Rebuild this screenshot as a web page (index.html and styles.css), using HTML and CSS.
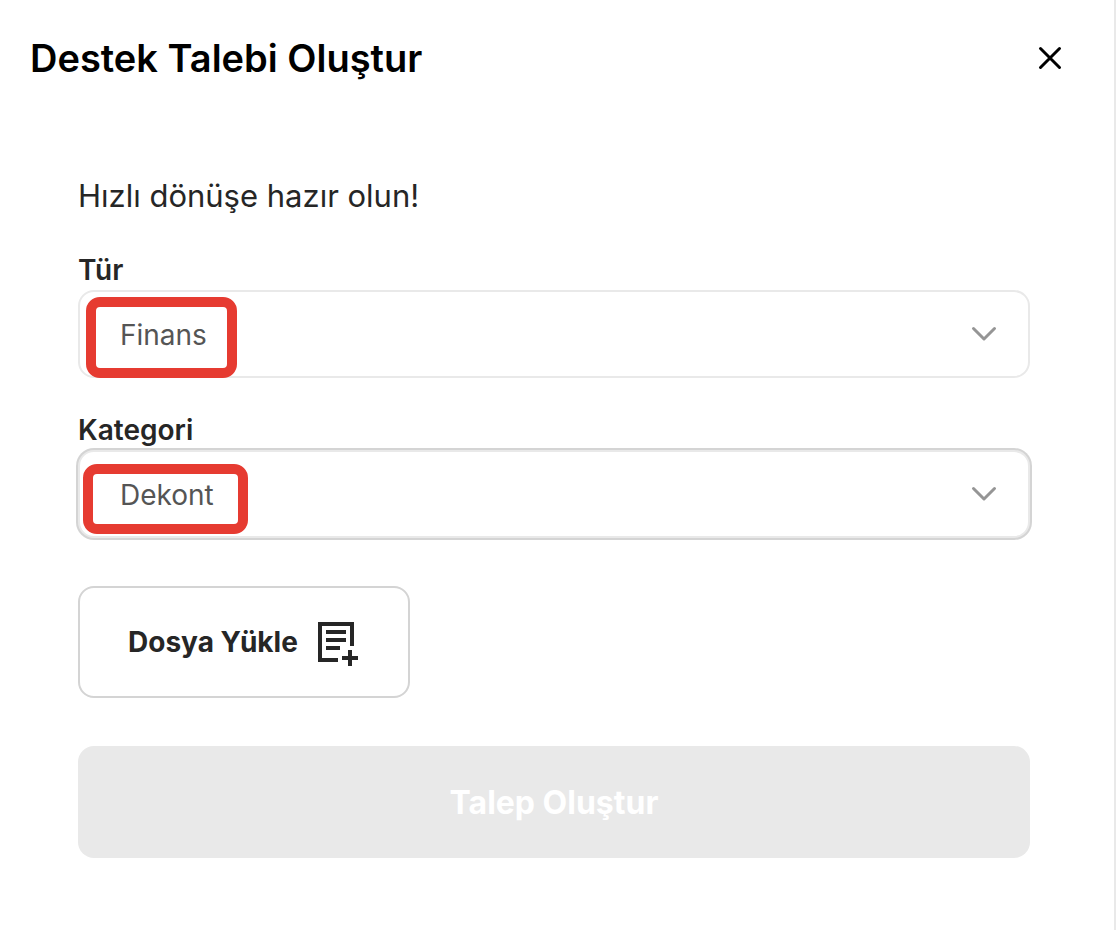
FILE: index.html
```html
<!DOCTYPE html>
<html lang="tr">
<head>
  <meta charset="UTF-8">
  <meta name="viewport" content="width=device-width, initial-scale=1.0">
  <title>Destek Talebi Oluştur</title>
  <link rel="stylesheet" href="styles.css">
</head>
<body>
  <div class="dialog">
    <header class="dialog-header">
      <h1>Destek Talebi Oluştur</h1>
      <button type="button" class="close-btn" aria-label="Kapat">
        <svg width="24" height="24" viewBox="0 0 24 24"><path d="M2.5 2.5 L21.5 21.5 M21.5 2.5 L2.5 21.5"/></svg>
      </button>
    </header>

    <form class="ticket-form">
      <p class="intro">Hızlı dönüşe hazır olun!</p>

      <div class="field">
        <label for="type">Tür</label>
        <div class="select-box">
          <select id="type">
            <option>Finans</option>
          </select>
          <svg class="chevron" width="28" height="18" viewBox="0 0 28 18"><path d="M3.5 3.5 L14 14 L24.5 3.5"/></svg>
          <span class="marker marker-type"></span>
        </div>
      </div>

      <div class="field">
        <label for="category">Kategori</label>
        <div class="select-box">
          <select id="category" class="active">
            <option>Dekont</option>
          </select>
          <svg class="chevron" width="28" height="18" viewBox="0 0 28 18"><path d="M3.5 3.5 L14 14 L24.5 3.5"/></svg>
          <span class="marker marker-category"></span>
        </div>
      </div>

      <button type="button" class="upload-btn">
        Dosya Yükle
        <svg width="48" height="48" viewBox="0 0 48 48">
          <path d="M26 42 H8 V6 H40 V28"/>
          <path d="M14 14 H34 M14 22 H34 M14 30 H28"/>
          <path d="M30 40 H46 M38 32 V48"/>
        </svg>
      </button>

      <button type="submit" class="submit-btn" disabled>Talep Oluştur</button>
    </form>
  </div>
</body>
</html>
```

FILE: styles.css
```css
* { box-sizing: border-box; }
body { margin: 0; background: #fff; color: #262626; font-family: Inter, "Liberation Sans", sans-serif; }
button, select { font-family: inherit; }
svg { display: block; fill: none; flex: none; }

.dialog { min-height: 100vh; border-right: 2px solid #e9e9e9; }
.dialog-header { display: flex; justify-content: space-between; align-items: center; padding: 34px 52px 0 30px; }
h1 { margin: 0; color: #000; font-size: 38px; line-height: 48px; font-weight: 600; }
.close-btn { padding: 0; border: none; background: none; cursor: pointer; }
.close-btn svg { stroke: #000; stroke-width: 3; stroke-linecap: round; }

.ticket-form { display: flex; flex-direction: column; padding: 94px 84px 48px 78px; }
.intro { margin: 0 0 34px; font-size: 31px; line-height: 40px; }

.field { display: flex; flex-direction: column; margin-bottom: 32px; }
.field label { font-size: 28px; line-height: 40px; font-weight: 600; }
.select-box { position: relative; }
select { display: block; width: 100%; height: 88px; padding: 2px 80px 0 40px; border: 2px solid #e9e9e9; border-radius: 16px; background: #fff; color: #555; font-size: 28px; appearance: none; outline: none; }
select.active { box-shadow: 0 0 0 2px #d4d4d4; }
.chevron { position: absolute; right: 32px; top: 35px; stroke: #959595; stroke-width: 3; stroke-linecap: round; stroke-linejoin: round; pointer-events: none; }

/* red frames around the chosen values */
.marker { position: absolute; border: 10px solid #e63b31; border-radius: 14px; pointer-events: none; }
.marker-type { left: 8px; top: 7px; width: 151px; height: 81px; }
.marker-category { left: 5px; top: 14px; width: 165px; height: 70px; }

.upload-btn { display: flex; align-items: center; align-self: flex-start; gap: 14px; height: 112px; margin: 16px 0 48px; padding: 0 48px; border: 2px solid #d4d4d4; border-radius: 16px; background: #fff; color: #262626; font-size: 28px; font-weight: 700; cursor: pointer; }
.upload-btn svg { stroke: #262626; stroke-width: 4; }
.submit-btn { height: 112px; border: none; border-radius: 16px; background: #e9e9e9; color: #fff; font-size: 32px; font-weight: 700; }
```
